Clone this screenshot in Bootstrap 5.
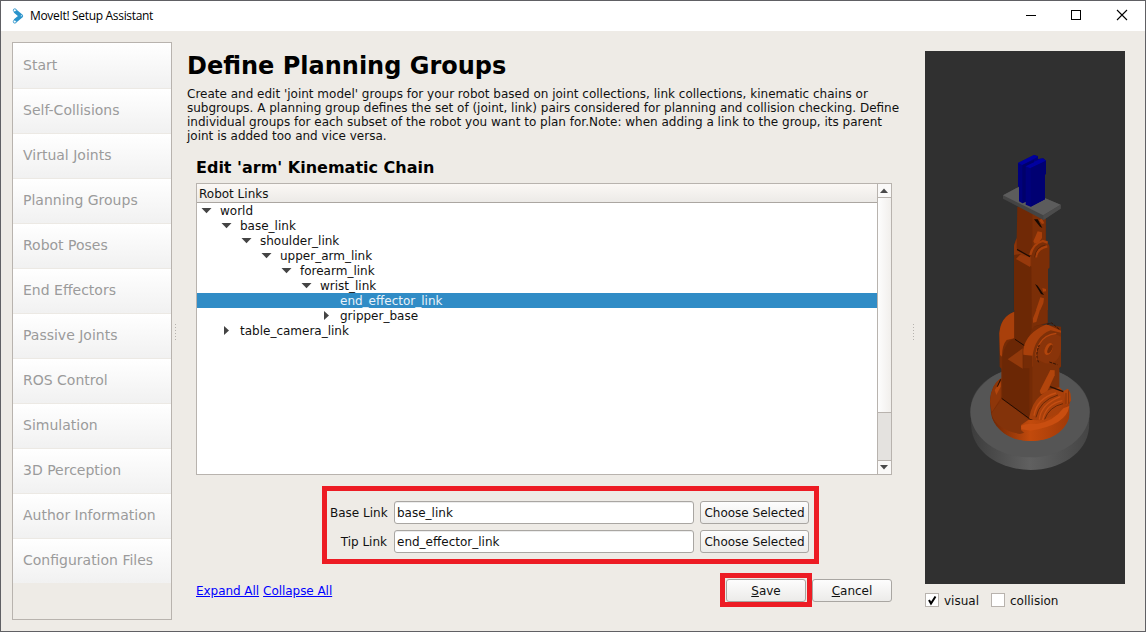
<!DOCTYPE html>
<html lang="en">
<head>
<meta charset="utf-8">
<title>MoveIt! Setup Assistant</title>
<link href="https://cdn.jsdelivr.net/npm/bootstrap@5.3.0/dist/css/bootstrap.min.css" rel="stylesheet">
<style>
body{font:12px/14px "DejaVu Sans",sans-serif;color:#111;background:#eeebe6;overflow:hidden}
.win{width:1146px;height:632px;border:1px solid #606064;background:#eeebe6}
.titlebar{height:30px;background:#fff;color:#000;padding-left:11px}
.titlebar .cap{font:12px/16px "Open Sans","Noto Sans",sans-serif;letter-spacing:-.32px;margin-left:6px}
.side{width:160px;height:578px;margin:11px 0 0 11px;border:1px solid #b8b3ae}
.side .list-group-item{height:45px;padding:0 0 0 10px;border:0;border-top:1px solid #ece9e4;background:linear-gradient(#fff,#f1f1f1);color:#9b9b9b;font-size:14px;line-height:42px}
.side .list-group-item:first-child{border-top:0;line-height:44px}
.split{width:15px;padding:293px 0 0 3px}
.split i,.split2 i{display:block;width:1px;height:1px;background:#b5b2ad;margin-bottom:2px}
.split2{width:33px;padding:293px 0 0 21px}
.main{width:705px;padding-top:21px}
h1{font-size:24px;line-height:28px;font-weight:700;color:#000;margin:0 0 7px;white-space:nowrap}
.desc{height:56px;margin:0;white-space:nowrap}
.inner{margin-left:9px}
h2{font-size:16px;line-height:20px;font-weight:700;color:#000;margin:15px 0 5px}
.tree{height:292px;border:1px solid #b8b3ae;background:#fff}
.thead{height:19px;line-height:20px;padding-left:2px;border-bottom:1px solid #aba6a1;background:linear-gradient(#fbf8f5,#eceae7)}
.trow{height:15px;line-height:15px}
.trow span{padding-top:2px}
.trow.sel{background:#308cc6;color:#e8f2f9}
.trow svg{width:11px;height:9px;margin-right:8px;margin-top:-1px}
.sb{width:14px;border-left:1px solid #b8b3ae;background:#e4e2df}
.sb .arr{height:14px;background:#faf9f8}
.sb svg{display:block}
.sb .handle{height:215px;border-bottom:1px solid #b8b3ae;background:linear-gradient(90deg,#fdfdfd,#f1efec)}
.redbox{border:5px solid #ed1c24}
.fields{width:497px;height:78px;margin:11px 0 0 126px;padding:10px 0 0 3px;gap:6px}
.fields label{width:57px;text-align:right;margin-right:7px;white-space:nowrap}
.fields input{width:300px;height:23px;border:1px solid #a9a6a2;border-radius:3px;padding:1px 0 0 2px;font-size:12px;line-height:20px;color:#111;background:#fff;box-shadow:inset 0 1px #ececec;margin-right:6px}
.qbtn{height:23px;border:1px solid #a9a6a2;border-radius:3px;padding:1px 0 0;font-size:12px;line-height:20px;color:#111;background:linear-gradient(#fdfdfd,#ecebe9);white-space:nowrap}
.foot{margin-top:9px;height:34px}
.foot a{color:#00f;text-decoration:underline;margin-right:4px;padding-top:2px;letter-spacing:-.05px}
.saveb{width:92px;height:34px;padding:1px}
.view{width:200px;height:533px;margin-top:20px;display:block;background:#303030}
.chk{width:14px;height:14px;border:1px solid #b8b3ae;background:#fff}
.chk svg{display:block}
.chk+span{padding-top:2px}
</style>
</head>
<body>
<div class="win">
  <header class="titlebar d-flex align-items-center">
    <svg width="12" height="16" viewBox="0 0 12 16"><path d="M3 3L9 8L3 13" fill="none" stroke="#2a93cb" stroke-width="4.2" stroke-linejoin="round"/><g fill="#fff" stroke="#2a93cb" stroke-width=".9"><circle cx="2.8" cy="2.3" r="1.5"/><circle cx="9.4" cy="7.8" r="1"/><circle cx="2.8" cy="13.6" r="1.5"/></g></svg>
    <span class="cap">MoveIt! Setup Assistant</span>
    <svg class="ms-auto" width="120" height="30" fill="none" stroke="#000" shape-rendering="crispEdges"><path d="M1 14.5H11M46.500 9.500h9v9h-9z"/><path d="M92 9l10 10M102 9l-10 10" shape-rendering="auto" stroke-width="1.1"/></svg>
  </header>
  <div class="d-flex">
    <nav class="side"><div class="list-group list-group-flush rounded-0">
      <div class="list-group-item">Start</div><div class="list-group-item">Self-Collisions</div><div class="list-group-item">Virtual Joints</div><div class="list-group-item">Planning Groups</div><div class="list-group-item">Robot Poses</div><div class="list-group-item">End Effectors</div><div class="list-group-item">Passive Joints</div><div class="list-group-item">ROS Control</div><div class="list-group-item">Simulation</div><div class="list-group-item">3D Perception</div><div class="list-group-item">Author Information</div><div class="list-group-item">Configuration Files</div>
    </div></nav>
    <div class="split"><i></i><i></i><i></i><i></i><i></i><i></i></div>
    <main class="main">
      <h1>Define Planning Groups</h1>
      <p class="desc">Create and edit 'joint model' groups for your robot based on joint collections, link collections, kinematic chains or<br>subgroups. A planning group defines the set of (joint, link) pairs considered for planning and collision checking. Define<br>individual groups for each subset of the robot you want to plan for.Note: when adding a link to the group, its parent<br>joint is added too and vice versa.</p>
      <div class="inner">
        <h2>Edit 'arm' Kinematic Chain</h2>
        <div class="tree d-flex">
          <div class="flex-grow-1" id="tree"><div class="thead">Robot Links</div></div>
          <div class="sb">
            <div class="arr border-bottom" style="border-color:#b8b3ae!important"><svg width="13" height="13"><path d="M2 9L6 4.500L10 9z" fill="#4a4a4a"/></svg></div>
            <div class="handle"></div>
            <div style="height:47px"></div>
            <div class="arr border-top" style="border-color:#b8b3ae!important"><svg width="13" height="13"><path d="M2 4L6 8.500L10 4z" fill="#4a4a4a"/></svg></div>
          </div>
        </div>
        <div class="fields redbox d-flex flex-column">
          <div class="d-flex align-items-center"><label>Base Link</label><input value="base_link"><button class="qbtn" style="width:109px">Choose Selected</button></div>
          <div class="d-flex align-items-center"><label>Tip Link</label><input value="end_effector_link"><button class="qbtn" style="width:109px">Choose Selected</button></div>
        </div>
        <div class="foot d-flex align-items-center">
          <a href="#">Expand All</a><a href="#">Collapse All</a>
          <div class="redbox saveb ms-auto d-flex justify-content-center align-items-center"><button class="qbtn" style="width:80px"><u>S</u>ave</button></div>
          <button class="qbtn" style="width:80px"><u>C</u>ancel</button>
        </div>
      </div>
    </main>
    <div class="split2"><i></i><i></i><i></i><i></i><i></i><i></i></div>
    <aside>
      <svg class="view" viewBox="925 51 200 533">
        <defs>
          <linearGradient id="rim"><stop offset="0" stop-color="#3c3c3c"/><stop offset=".5" stop-color="#606060"/><stop offset="1" stop-color="#444"/></linearGradient>
          <linearGradient id="ring"><stop offset="0" stop-color="#6d2705"/><stop offset=".5" stop-color="#c24a0c"/><stop offset="1" stop-color="#a03a08"/></linearGradient>
        </defs>
        <g transform="translate(960 290) scale(.33333)">
          <!-- base -->
          <path d="M31 360C31 290 110 230 210 230S389 290 389 360L387 415C380 490 300 540 212 540S40 490 34 412z" fill="url(#rim)"/>
          <ellipse cx="210" cy="366" rx="179" ry="136" fill="#555"/>
          <path d="M90 335C92 300 105 275 125 265L290 285L312 305L322 297L330 308L332 330L328 345V375C320 425 270 453 212 453S100 420 93 370z" fill="url(#ring)"/>
          <path d="M90 335Q92 285 122 265V325L95 368z" fill="#8e3609"/>
          <path d="M94 370L126 328L208 388L183 405V420L215 450Q115 450 94 370z" fill="#83330a"/>
          <path d="M95 378Q115 420 180 432L210 424Q280 425 327 370V385Q300 453 212 453T95 378z" fill="url(#ring)"/>
          <path d="M183 408Q195 400 230 402Q280 395 310 355L328 348Q320 405 212 422L184 418z" fill="#c94e10"/>
          <path d="M104 300L122 275V290L109 315z" fill="#b2450c"/><path d="M112 290L122 268" stroke="#1b0a02" stroke-width="3"/>
          <!-- shoulder -->
          <path d="M118 130Q122 80 163 65L215 100L303 110V230L297 235V295L208 390L124 326V236L119 230z" fill="#752b06"/>
          <path d="M118 130Q122 80 163 65V145L140 150Q126 165 126 200L120 195z" fill="#a9400b"/>
          <path d="M163 145Q135 155 127 200V325L208 387V235L190 235V150z" fill="#6b2705"/>
          <path d="M163 0H262V100L220 110L195 165L163 145z" fill="#6c2805"/>
          <path d="M215 0H263V98L225 108Q215 115 215 130z" fill="#7b2e07"/>
          <path d="M238 0H262V30L249 30L229 96L219 98V85L242 28z" fill="#a9400b"/>
          <path d="M235 0h24v15l-10-2z" fill="#451903"/><path d="M244 2L259 15" stroke="#180801" stroke-width="5"/>
          <path d="M143 208L188 175V236z" fill="#92390b"/><path d="M165 148L198 170" stroke="#1c0b03" stroke-width="3"/>
          <path d="M190 180Q196 130 260 103L303 122V165L294 228L245 215L217 230V197L190 194z" fill="#a9400b"/>
          <path d="M217 205Q222 140 272 121L303 128V228L298 233V292L243 311L222 345L217 380z" fill="#7e3008"/>
          <path d="M232 190Q235 145 280 128L303 140V180Q295 225 255 220L235 210z" fill="#89340a"/>
          <path d="M233 212Q222 190 238 162Q252 134 289 130" fill="none" stroke="#b5460e" stroke-width="4"/><path d="M236 217Q224 195 238 165M268 216L292 224M260 103L275 99L300 120" fill="none" stroke="#351404" stroke-width="3" stroke-dasharray="9 3"/>
          <ellipse cx="266" cy="177" rx="11" ry="19" transform="rotate(25 266 177)" fill="#b2450c"/><ellipse cx="270" cy="177" rx="6" ry="14" transform="rotate(25 270 177)" fill="#752b06"/>
          <path d="M271 240L284 241V256L260 308L243 313L239 303z" fill="#b2450c"/>
          <path d="M125 325L211 388L237 388" fill="none" stroke="#210c03" stroke-width="3"/>
          <path d="M207 385Q215 340 240 318Q265 295 298 292L311 306L313 326L306 350Q285 382 240 391L219 390z" fill="#a9400b"/>
          <path d="M222 377Q230 325 288 309M238 389Q243 342 301 320M248 390Q258 342 307 332" fill="none" stroke="#c54e12" stroke-width="4"/>
          <path d="M228 382Q238 332 294 315M254 388Q268 350 309 341" fill="none" stroke="#6a2806" stroke-width="3"/>
          <path d="M270 290L310 305" stroke="#2a1003" stroke-width="4"/>
          <path d="M311 302L324 296L331 309L333 332L318 345z" fill="#b2450c"/><path d="M318 309v33M326 301v40" stroke="#843209" stroke-width="3"/>
        </g>
        <g transform="translate(960 140) scale(.33333)">
          <!-- forearm -->
          <path d="M172 200H257V310L268 320V383L263 387V482L261 510H162V315L170 294z" fill="#702906"/>
          <path d="M217 215H257V300L243 302L217 340z" fill="#7b2e07"/>
          <path d="M162 317L170 294V325L215 350V380L162 350z" fill="#8b350a"/>
          <path d="M162 345L180 342L212 381V510H162z" fill="#6c2805"/>
          <path d="M168 357L180 344L210 352V381z" fill="#97390c"/>
          <path d="M171 328L210 350" stroke="#210c03" stroke-width="4"/>
          <path d="M214 345Q222 310 258 300L268 317V383L264 387V510H216z" fill="#7b2e07"/>
          <path d="M211 345Q218 312 248 303L263 308M228 352Q230 325 262 319" fill="none" stroke="#a9400b" stroke-width="7"/>
          <path d="M224 352Q228 320 256 315" fill="none" stroke="#5f2305" stroke-width="3"/>
          <path d="M233 274L246 277V294L237 307L224 311L220 304zM246 236l7 14-7 2-9-12zM241 472L252 475L250 490L241 510H228zM247 444l11 3v7l-9 1z" fill="#a9400b"/>
          <path d="M222 238H233L247 264L240 260zM225 432L233 437L252 465L243 462z" fill="#160902"/>
          <!-- flange and gripper -->
          <path d="M129 166L176 141L302 194V205L251 240L129 176z" fill="#444"/>
          <path d="M129 166L176 141L302 194L250 226z" fill="#5c5c5c"/>
          <path d="M250 226L302 194V206L250 240z" fill="#4c4c4c"/>
          <path d="M174 69L222 45L234 48V57L250 55L258 62V101L255 104V178L212 200L197 194V185L187 190L177 184V140H174z" fill="#00007d"/>
          <path d="M174 69L222 45L234 50L187 75z" fill="#0000a0"/><path d="M195 78L246 55L258 62L211 85z" fill="#0000a0"/>
          <path d="M187 75L222 59V67L197 79V185L187 190z" fill="#00006b"/><path d="M212 84L258 62V101L255 104V178L212 200z" fill="#000072"/>
        </g>
      </svg>
      <div class="d-flex align-items-center" style="margin-top:9px;height:14px">
        <span class="chk"><svg width="12" height="12"><path d="M3 6L5 9.500L9.500 2.500" fill="none" stroke="#000" stroke-width="2"/></svg></span><span style="margin:0 12px 0 5px">visual</span>
        <span class="chk"></span><span style="margin-left:5px">collision</span>
      </div>
    </aside>
  </div>
</div>
<script src="https://cdn.jsdelivr.net/npm/bootstrap@5.3.0/dist/js/bootstrap.bundle.min.js"></script>
<script>
// [name, depth, state]: o = open, c = closed, s = selected leaf
const rows=[['world',0,'o'],['base_link',1,'o'],['shoulder_link',2,'o'],['upper_arm_link',3,'o'],['forearm_link',4,'o'],['wrist_link',5,'o'],['end_effector_link',6,'s'],['gripper_base',6,'c'],['table_camera_link',1,'c']];
const shape={o:'M.5 2H10.500L5.500 7.200z',c:'M3 0L8 4.500L3 9z',s:''};
document.getElementById('tree').insertAdjacentHTML('beforeend',rows.map(([n,d,s])=>`<div class="trow d-flex align-items-center${s==='s'?' sel':''}" style="padding-left:${4+20*d}px"><svg><path d="${shape[s]}" fill="#444"/></svg><span>${n}</span></div>`).join(''));
</script>
</body>
</html>
